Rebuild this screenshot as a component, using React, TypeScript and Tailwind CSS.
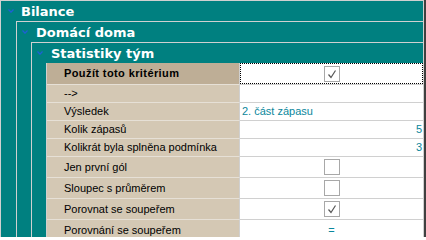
import React from 'react'

type Row = {
  label: string
  value?: string
  align?: 'left' | 'right' | 'center'
  check?: boolean
  tall?: boolean
}

const rows: Row[] = [
  { label: '-->', value: '' },
  { label: 'Výsledek', value: '2. část zápasu', align: 'left' },
  { label: 'Kolik zápasů', value: '5', align: 'right' },
  { label: 'Kolikrát byla splněna podmínka', value: '3', align: 'right' },
  { label: 'Jen první gól', check: false, tall: true },
  { label: 'Sloupec s průměrem', check: false, tall: true },
  { label: 'Porovnat se soupeřem', check: true, tall: true },
  { label: 'Porovnání se soupeřem', value: '=', align: 'center', tall: true },
]

function Chevron() {
  return (
    <svg width="6" height="4" viewBox="0 0 6 4" className="shrink-0">
      <path d="M0.5 0.5 L3 3.2 L5.5 0.5" fill="none" stroke="#1f5fd6" strokeWidth="1.2" />
    </svg>
  )
}

function Checkbox({ checked }: { checked: boolean }) {
  return (
    <div className="w-[16px] h-[16px] border border-[#a8a8a8] bg-white flex items-center justify-center">
      {checked && (
        <svg width="14" height="14" viewBox="0 0 14 14">
          <path d="M3.5 7.5 L6 10.5 L10.5 3.5" fill="none" stroke="#555555" strokeWidth="1.2" />
        </svg>
      )}
    </div>
  )
}

function Header({ title, first }: { title: string; first?: boolean }) {
  return (
    <div
      className={`h-[20px] flex items-center ${first ? 'pl-[7px] gap-[7px]' : 'pl-[5px] gap-[8px]'}`}
    >
      <Chevron />
      <span className="text-white font-bold text-[13px] leading-none font-['DejaVu_Sans',sans-serif]">
        {title}
      </span>
    </div>
  )
}

function Grid() {
  return (
    <div className="ml-[14px] border-l border-[#d0d0d0] font-['Liberation_Sans',Arial,sans-serif] text-[11px] leading-none">
      <div className="flex h-[22px]">
        <div className="w-[193px] bg-[#beae96] border-r border-b border-r-[#d0d0d0] border-b-[#e6e0d6] pl-[17px] flex items-center font-bold tracking-[0.4px] text-black">
          Použít toto kritérium
        </div>
        <div className="flex-1 bg-white border-b border-[#d0d0d0]">
          <div className="h-full border border-dotted border-black flex items-center justify-center">
            <Checkbox checked />
          </div>
        </div>
      </div>
      {rows.map((r, i) => (
        <div key={i} className={`flex ${r.tall ? 'h-[21px]' : 'h-[18px]'}`}>
          <div className="w-[193px] bg-[#d4c8b4] border-r border-b border-r-[#d0d0d0] border-b-[#e6e0d6] pl-[17px] flex items-center text-black">
            {r.label}
          </div>
          <div
            className={`flex-1 bg-white border-b border-[#d0d0d0] flex items-center text-[#0a879c] ${
              r.check !== undefined
                ? 'justify-center'
                : r.align === 'right'
                  ? 'justify-end pr-[1px]'
                  : r.align === 'center'
                    ? 'justify-center'
                    : 'justify-start pl-[2px]'
            }`}
          >
            {r.check !== undefined ? <Checkbox checked={r.check} /> : r.value}
          </div>
        </div>
      ))}
    </div>
  )
}

export default function App() {
  return (
    <div className="w-[426px] h-[237px] overflow-hidden bg-[#008080] border-r-2 border-[#404040]">
      <div className="h-full border-t border-l border-r border-[#d0d0d0]">
        <Header title="Bilance" first />
        <div className="ml-[15px] border-t border-l border-[#d0d0d0]">
          <Header title="Domácí doma" />
          <div className="ml-[14px] border-t border-l border-[#d0d0d0]">
            <Header title="Statistiky tým" />
            <Grid />
          </div>
        </div>
      </div>
    </div>
  )
}
